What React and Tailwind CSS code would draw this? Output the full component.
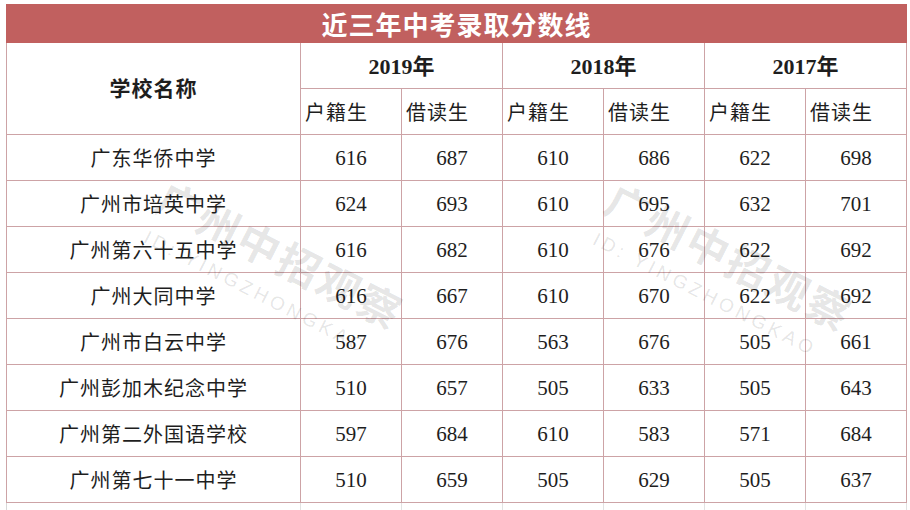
import React from 'react';

const rows = [
  ['广东华侨中学', 616, 687, 610, 686, 622, 698],
  ['广州市培英中学', 624, 693, 610, 695, 632, 701],
  ['广州第六十五中学', 616, 682, 610, 676, 622, 692],
  ['广州大同中学', 616, 667, 610, 670, 622, 692],
  ['广州市白云中学', 587, 676, 563, 676, 505, 661],
  ['广州彭加木纪念中学', 510, 657, 505, 633, 505, 643],
  ['广州第二外国语学校', 597, 684, 610, 583, 571, 684],
  ['广州第七十一中学', 510, 659, 505, 629, 505, 637],
];

const years = ['2019年', '2018年', '2017年'];

const serif = { fontFamily: '"Liberation Serif", "Noto Sans CJK SC", serif' };

const Watermark = ({ className }) => (
  <div
    className={`absolute w-[280px] flex flex-col items-center rotate-[27deg] pointer-events-none text-[rgba(0,0,0,0.11)] ${className}`}
    style={{ fontFamily: '"Noto Sans CJK SC", sans-serif' }}
  >
    <div className="text-[42px] font-bold leading-[46px] tracking-[3px]">广州中招观察</div>
    <div
      className="text-[19px] leading-[26px] tracking-[4px] mt-[10px] mr-[10px]"
      style={{ fontFamily: '"Liberation Sans", sans-serif' }}
    >
      ID: YINGZHONGKAO
    </div>
  </div>
);

const App = () => {
  return (
    <div className="relative w-[910px] h-[510px] bg-white overflow-hidden text-[#1e1e1e]">
      <div className="ml-[6px] pt-[4px]">
        <div
          className="w-[901px] h-[39px] bg-[#c1605f] flex items-center justify-center text-white text-[26px] font-bold tracking-[1px]"
          style={{ fontFamily: '"Noto Sans CJK SC", sans-serif' }}
        >
          近三年中考录取分数线
        </div>

        <div
          className="grid grid-cols-[294px_repeat(6,101px)] grid-rows-[repeat(10,46px)] border-l border-[#cda3a6]"
          style={serif}
        >
          <div className="row-span-2 border-r border-b border-[#cda3a6] flex items-center justify-center pt-[3px] text-[21px] font-bold tracking-[1px]">
            学校名称
          </div>
          {years.map((y) => (
            <div
              key={y}
              className="col-span-2 border-r border-b border-[#cda3a6] flex items-center justify-center pt-[2px] text-[22px] font-bold"
            >
              {y}
            </div>
          ))}
          {years.map((y) => (
            <React.Fragment key={'s' + y}>
              <div className="border-r border-b border-[#cda3a6] flex items-center pl-[4px] pt-[3px] text-[20px] tracking-[1px]">
                户籍生
              </div>
              <div className="border-r border-b border-[#cda3a6] flex items-center pl-[4px] pt-[3px] text-[20px] tracking-[1px]">
                借读生
              </div>
            </React.Fragment>
          ))}
          {rows.map((r) => (
            <React.Fragment key={r[0]}>
              <div className="border-r border-b border-[#cda3a6] flex items-center justify-center pt-[3px] text-[20px] tracking-[1px]">
                {r[0]}
              </div>
              {r.slice(1).map((n, i) => (
                <div
                  key={i}
                  className="border-r border-b border-[#cda3a6] flex items-center justify-center pt-[3px] text-[21px]"
                >
                  {n}
                </div>
              ))}
            </React.Fragment>
          ))}
        </div>
        <div className="grid grid-cols-[294px_repeat(6,101px)] h-[10px] border-l border-[#d8d8d8]">
          {Array.from({ length: 7 }).map((_, i) => (
            <div key={i} className="border-r border-[#e2e2e2]" />
          ))}
        </div>
      </div>

      <Watermark className="left-[133px] top-[229px]" />
      <Watermark className="left-[582px] top-[231px]" />
    </div>
  );
};

export default App;
